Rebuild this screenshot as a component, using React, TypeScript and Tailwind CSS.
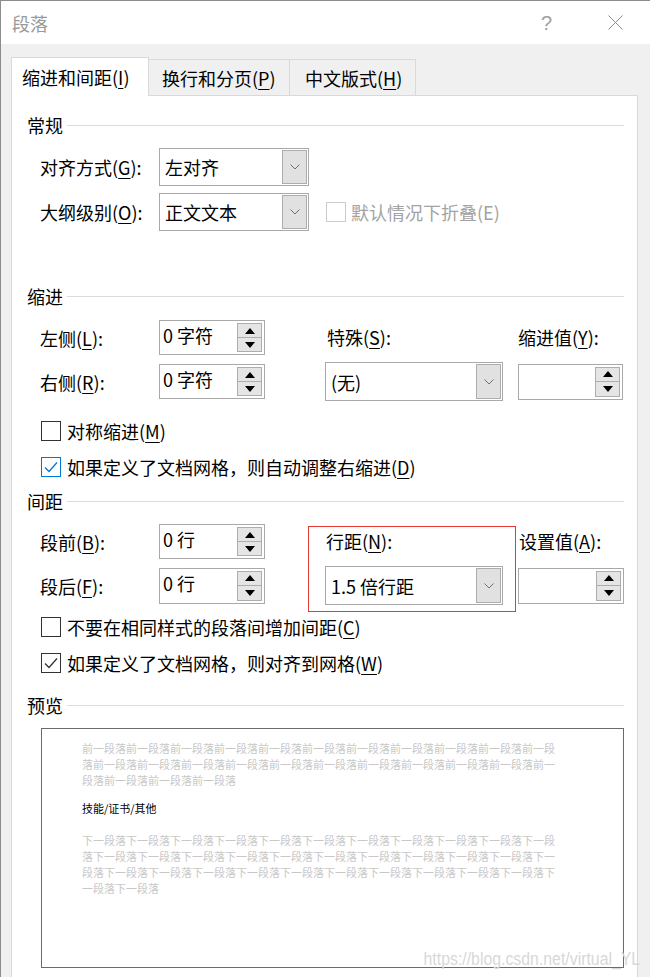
import React from 'react';

const UI_FONT = "font-['Noto_Sans_CJK_SC',sans-serif]";

// 带加速键下划线的标签，例如 对齐方式(G):
const Label = ({ text, k, colon = true, className = '' }: { text: string, k: string, colon?: boolean, className?: string }) => (
    <span className={`text-[18px] leading-[24px] text-black whitespace-nowrap ${className}`}>
        {text}(<u className="underline-offset-[3px]">{k}</u>){colon ? ':' : ''}
    </span>
);

const SectionHeader = ({ title }: { title: string }) => (
    <div className="flex items-center h-[24px]">
        <span className="text-[18px] leading-[24px] text-black">{title}</span>
        <div className="flex-1 h-px bg-[#dcdcdc] ml-[4px]" />
    </div>
);

const Chevron = () => (
    <svg width="10" height="6" viewBox="0 0 10 6">
        <polyline points="0.5,0.5 5,5 9.5,0.5" fill="none" stroke="#707070" strokeWidth="1" />
    </svg>
);

const Select = ({ value, w, h }: { value: string, w: string, h: string }) => (
    <div className={`${w} ${h} border border-[#a9a9a9] bg-white flex items-stretch p-[1px]`}>
        <div className="flex-1 flex items-center pl-[4px] text-[18px] leading-[24px] text-black">{value}</div>
        <div className="w-[25px] border border-[#adadad] bg-[#e1e1e1] flex items-center justify-center">
            <Chevron />
        </div>
    </div>
);

const Triangle = ({ up }: { up?: boolean }) => (
    <svg width="10" height="6" viewBox="0 0 10 6">
        <polygon points={up ? '0,6 10,6 5,0' : '0,0 10,0 5,6'} fill="#000" />
    </svg>
);

const Spinner = ({ value = '', w = 'w-[106px]', h = 'h-[35px]' }: { value?: string, w?: string, h?: string }) => (
    <div className={`${w} ${h} border border-[#a9a9a9] bg-white flex items-stretch py-[2px] pr-[2px]`}>
        <div className="flex-1 pl-[3px] text-[18px] leading-[24px] text-black">{value}</div>
        <div className="w-[25px] flex flex-col">
            <div className="flex-1 border border-[#adadad] bg-[#e5e5e5] flex items-center justify-center"><Triangle up /></div>
            <div className="flex-1 border border-t-0 border-[#adadad] bg-[#e5e5e5] flex items-center justify-center"><Triangle /></div>
        </div>
    </div>
);

const CheckBox = ({ checked, color = '#333333', disabled }: { checked?: boolean, color?: string, disabled?: boolean }) => (
    <div
        className={`w-[20px] h-[20px] bg-white border flex items-center justify-center ${disabled ? 'border-[#cccccc]' : checked && color !== '#333333' ? 'border-[#0078d7]' : 'border-[#333333]'}`}
    >
        {checked && (
            <svg width="16" height="16" viewBox="0 0 16 16">
                <polyline points="2,8.5 6,12.5 14,3.5" fill="none" stroke={color} strokeWidth="1.3" />
            </svg>
        )}
    </div>
);

const CheckRow = ({ children, checked, color }: { children: React.ReactNode, checked?: boolean, color?: string }) => (
    <div className="flex items-center pl-[14px] h-[24px]">
        <CheckBox checked={checked} color={color} />
        <span className="ml-[6px] text-[18px] leading-[24px] text-black whitespace-nowrap">{children}</span>
    </div>
);

const prevText = '前一段落'.repeat(25);
const nextText = '下一段落'.repeat(34);

export default function App() {
    return (
        <div className={`relative w-[650px] h-[977px] overflow-hidden bg-[#f0f0f0] border-l border-t border-[#8c8c8c] ${UI_FONT}`}>
            {/* 标题栏 */}
            <div className="h-[43px] bg-white flex items-center pl-[11px]">
                <span className="text-[18px] leading-[24px] text-[#9a9a9a]">段落</span>
                <span className="ml-auto text-[20px] leading-[24px] text-[#a0a0a0] font-['Liberation_Sans',sans-serif] font-light mr-[56px]">?</span>
                <svg width="15" height="15" viewBox="0 0 15 15" className="mr-[27px]">
                    <path d="M0.5 0.5 L14.5 14.5 M14.5 0.5 L0.5 14.5" stroke="#8a8a8a" strokeWidth="1" />
                </svg>
            </div>

            {/* 选项卡 */}
            <div className="flex items-end pl-[10px] pt-[13px]">
                <div className="relative z-10 w-[138px] h-[39px] -mb-px bg-white border border-b-0 border-[#d9d9d9] flex items-center pl-[10px]">
                    <Label text="缩进和间距" k="I" colon={false} />
                </div>
                <div className="w-[141px] h-[36px] bg-[#f0f0f0] border-t border-r border-[#d9d9d9] flex items-center pl-[13px]">
                    <Label text="换行和分页" k="P" colon={false} />
                </div>
                <div className="w-[126px] h-[36px] bg-[#f0f0f0] border-t border-r border-[#d9d9d9] flex items-center pl-[15px]">
                    <Label text="中文版式" k="H" colon={false} />
                </div>
            </div>

            {/* 选项卡内容 */}
            <div className="ml-[10px] w-[627px] h-[900px] bg-white border border-[#d9d9d9] pl-[15px] pr-[13px] pt-[17px]">
                <SectionHeader title="常规" />
                <div className="mt-[11px] flex items-center pl-[13px]">
                    <Label text="对齐方式" k="G" className="w-[119px]" />
                    <Select value="左对齐" w="w-[150px]" h="h-[38px]" />
                </div>
                <div className="mt-[7px] flex items-center pl-[13px]">
                    <Label text="大纲级别" k="O" className="w-[119px]" />
                    <Select value="正文文本" w="w-[150px]" h="h-[38px]" />
                    <div className="ml-[17px]"><CheckBox disabled /></div>
                    <span className="ml-[5px] text-[18px] leading-[24px] text-[#a3a3a3]">默认情况下折叠(E)</span>
                </div>

                <div className="mt-[53px]"><SectionHeader title="缩进" /></div>
                <div className="mt-[12px] flex items-center pl-[13px] h-[35px]">
                    <Label text="左侧" k="L" className="w-[119px]" />
                    <Spinner value="0 字符" />
                    <div className="ml-[60px] w-[178px] pl-[2px]"><Label text="特殊" k="S" /></div>
                    <div className="ml-[15px] w-[105px]"><Label text="缩进值" k="Y" /></div>
                </div>
                <div className="mt-[7px] flex items-center pl-[13px] h-[39px]">
                    <Label text="右侧" k="R" className="w-[119px]" />
                    <Spinner value="0 字符" />
                    <div className="ml-[60px]"><Select value="(无)" w="w-[178px]" h="h-[39px]" /></div>
                    <div className="ml-[15px]"><Spinner w="w-[105px]" h="h-[36px]" /></div>
                </div>

                <div className="mt-[18px]"><CheckRow>对称缩进(<u className="underline-offset-[3px]">M</u>)</CheckRow></div>
                <div className="mt-[12px]"><CheckRow checked color="#0078d7">如果定义了文档网格，则自动调整右缩进(<u className="underline-offset-[3px]">D</u>)</CheckRow></div>

                <div className="mt-[10px]"><SectionHeader title="间距" /></div>
                <div className="mt-[11px] flex items-center pl-[13px] h-[35px]">
                    <Label text="段前" k="B" className="w-[119px]" />
                    <Spinner value="0 行" />
                    <div className="ml-[60px] w-[178px] pl-[1px]"><Label text="行距" k="N" /></div>
                    <div className="ml-[15px] w-[105px] pl-[1px]"><Label text="设置值" k="A" /></div>
                </div>
                <div className="mt-[7px] flex items-center pl-[13px] h-[39px]">
                    <Label text="段后" k="F" className="w-[119px]" />
                    <Spinner value="0 行" h="h-[36px]" />
                    <div className="ml-[60px]"><Select value="1.5 倍行距" w="w-[178px]" h="h-[39px]" /></div>
                    <div className="ml-[15px]"><Spinner w="w-[106px]" h="h-[36px]" /></div>
                </div>

                <div className="mt-[10px]"><CheckRow>不要在相同样式的段落间增加间距(<u className="underline-offset-[3px]">C</u>)</CheckRow></div>
                <div className="mt-[12px]"><CheckRow checked>如果定义了文档网格，则对齐到网格(<u className="underline-offset-[3px]">W</u>)</CheckRow></div>

                <div className="mt-[18px]"><SectionHeader title="预览" /></div>
                <div className="mt-[11px] ml-[14px] h-[240px] border border-[#6b6b6b] bg-white pl-[40px] pt-[11px] text-[11px] leading-[16px]">
                    <p className="w-[478px] break-all text-[#c8c8c8]">{prevText}</p>
                    <p className="mt-[12px] text-black">技能/证书/其他</p>
                    <p className="mt-[16px] w-[478px] break-all text-[#c8c8c8]">{nextText}</p>
                </div>
            </div>

            {/* 行距标注框 */}
            <div className="absolute left-[307px] top-[525px] w-[208px] h-[86px] border border-[#e53935] pointer-events-none" />

            {/* 水印 */}
            <div className="absolute right-[10px] top-[946px] origin-right scale-x-[0.88] text-[18px] leading-[24px] font-['Liberation_Sans',sans-serif] text-[#d8d8d8] whitespace-nowrap">
                https://blog.csdn.net/virtual_YL
            </div>
        </div>
    );
}
